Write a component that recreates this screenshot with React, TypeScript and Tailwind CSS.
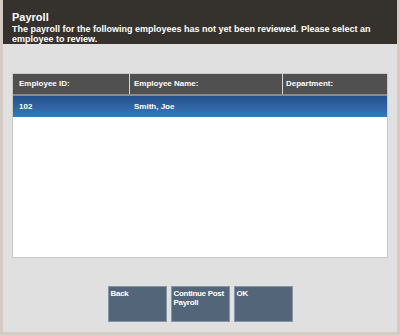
const employees = [{ id: "102", name: "Smith, Joe", dept: "" }];

export default function App() {
  return (
    <div
      className="w-[400px] h-[335px] bg-[#e0e0e0] flex flex-col border-l-[3px] border-r-[3px] border-b-[3px] border-[#d4cbc4] overflow-hidden"
      style={{ fontFamily: '"Liberation Sans", Arial, sans-serif' }}
    >
      <header className="bg-[#35322e] h-[44px] px-[9px] pt-[11px] text-white font-bold">
        <div className="text-[11px] leading-[13px]">Payroll</div>
        <div className="text-[9px] leading-[10px]">
          The payroll for the following employees has not yet been reviewed. Please select an employee to review.
        </div>
      </header>

      <div className="mx-[9px] mt-[29px] h-[185px] bg-white border border-[#c8c8c8] flex flex-col">
        <div className="grid grid-cols-[117px_153px_1fr] h-[20px] bg-[#505050] text-white text-[8px] font-bold">
          <div className="px-[6px] flex items-center border-r border-[#d8d8d8]">Employee ID:</div>
          <div className="px-[4px] flex items-center border-r border-[#d8d8d8]">Employee Name:</div>
          <div className="px-[3px] flex items-center">Department:</div>
        </div>
        {employees.map((e) => (
          <div
            key={e.id}
            className="grid grid-cols-[117px_153px_1fr] h-[23px] bg-gradient-to-b from-[#24508a] to-[#3a78bc] border-t-2 border-[#8a8a8a] text-white text-[8px] font-bold"
          >
            <div className="px-[6px] flex items-center">{e.id}</div>
            <div className="px-[4px] flex items-center">{e.name}</div>
            <div className="px-[3px] flex items-center">{e.dept}</div>
          </div>
        ))}
      </div>

      <div className="flex justify-center gap-[4px] mt-[28px]">
        {["Back", "Continue Post Payroll", "OK"].map((b) => (
          <button
            key={b}
            className="w-[59px] h-[36px] bg-[#526579] border border-[#8796a6] text-white text-[8px] tracking-[-0.3px] font-bold leading-[9px] text-left px-[2px] pt-[2px] flex items-start"
          >
            {b}
          </button>
        ))}
      </div>
    </div>
  );
}
